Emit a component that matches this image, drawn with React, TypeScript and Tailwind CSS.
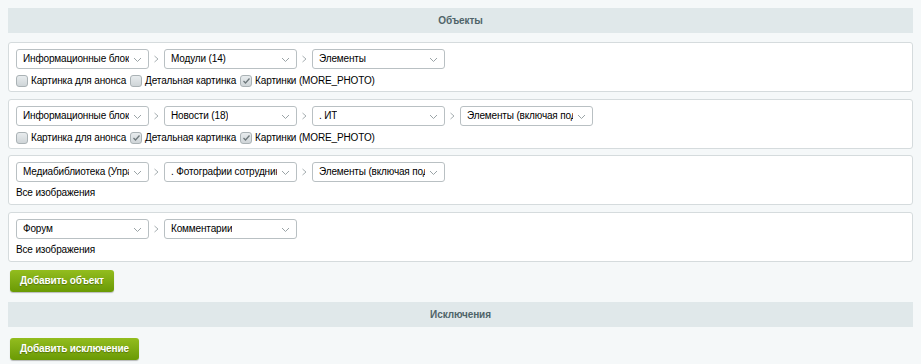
const Chevron = () => (
  <svg width="15" height="20" viewBox="0 0 15 20" className="shrink-0">
    <path d="M5.5 7 L9 10 L5.5 13" fill="none" stroke="#a7afb2" strokeWidth="1" />
  </svg>
);

const Select = ({ label, width = 133 }: { label: string; width?: number }) => (
  <div
    className="relative flex h-[20px] shrink-0 items-center rounded-[3px] border border-[#b9c0c3] bg-white pl-[6px] pr-[19px]"
    style={{ width }}
  >
    <span className="overflow-hidden whitespace-nowrap text-[10px] leading-[14px] tracking-[-0.15px] text-black">
      {label}
    </span>
    <svg width="9" height="6" viewBox="0 0 9 6" className="absolute right-[6px] top-[7px]">
      <path d="M1 1 L4.5 4.5 L8 1" fill="none" stroke="#9aa3a6" strokeWidth="1" />
    </svg>
  </div>
);

const Checkbox = ({ label, checked }: { label: string; checked?: boolean }) => (
  <label className="flex items-center gap-[3px] text-[10px] leading-[14px] tracking-[-0.15px] text-black">
    <span className="flex h-[12px] w-[12px] items-center justify-center rounded-[3px] border border-[#aab2b5] bg-gradient-to-b from-[#e8ecee] to-[#cfd5d8]">
      {checked && (
        <svg width="9" height="8" viewBox="0 0 9 8">
          <path d="M1.5 4 L3.5 6 L7.5 1.5" fill="none" stroke="#6d777b" strokeWidth="1.3" />
        </svg>
      )}
    </span>
    <span className="mr-[4px]">{label}</span>
  </label>
);

type Row = {
  selects: { label: string; width?: number }[];
  checks?: { label: string; checked?: boolean }[];
  note?: string;
};

const rows: Row[] = [
  {
    selects: [{ label: "Информационные блоки" }, { label: "Модули (14)" }, { label: "Элементы" }],
    checks: [
      { label: "Картинка для анонса" },
      { label: "Детальная картинка" },
      { label: "Картинки (MORE_PHOTO)", checked: true },
    ],
  },
  {
    selects: [
      { label: "Информационные блоки" },
      { label: "Новости (18)" },
      { label: ". ИТ" },
      { label: "Элементы (включая подразделы)" },
    ],
    checks: [
      { label: "Картинка для анонса" },
      { label: "Детальная картинка", checked: true },
      { label: "Картинки (MORE_PHOTO)", checked: true },
    ],
  },
  {
    selects: [
      { label: "Медиабиблиотека (Управление)" },
      { label: ". Фотографии сотрудников" },
      { label: "Элементы (включая подразделы)" },
    ],
    note: "Все изображения",
  },
  {
    selects: [{ label: "Форум" }, { label: "Комментарии" }],
    note: "Все изображения",
  },
];

const Header = ({ title }: { title: string }) => (
  <div className="flex h-[25px] items-center justify-center bg-[#e0e8ea] text-[10px] font-bold tracking-[-0.1px] text-[#4f6469]">
    {title}
  </div>
);

const GreenButton = ({ label }: { label: string }) => (
  <button className="ml-[2px] h-[22px] rounded-[3px] bg-gradient-to-b from-[#93bd1e] to-[#6a9a04] px-[10px] text-[10px] font-bold tracking-[-0.15px] text-white shadow-[0_1px_1px_rgba(0,0,0,0.25)] [text-shadow:0_1px_1px_rgba(0,0,0,0.3)]">
    {label}
  </button>
);

export default function App() {
  return (
    <div className="min-h-[364px] bg-[#f5f8f9] px-[8px] pt-[8px] font-[family-name:'Liberation_Sans',Arial,sans-serif]">
      <Header title="Объекты" />
      <div className="mt-[9px] flex flex-col gap-[6.5px]">
        {rows.map((row, i) => (
          <div
            key={i}
            className="h-[50px] rounded-[3px] border border-[#d5dbdd] bg-white pl-[7px] pt-[6px]"
          >
            <div className="flex items-center">
              {row.selects.map((s, j) => (
                <div key={j} className="flex items-center">
                  {j > 0 && <Chevron />}
                  <Select label={s.label} width={s.width} />
                </div>
              ))}
            </div>
            {row.checks ? (
              <div className="mt-[5px] flex items-center">
                {row.checks.map((c, j) => (
                  <Checkbox key={j} label={c.label} checked={c.checked} />
                ))}
              </div>
            ) : (
              <div className="mt-[4px] text-[10px] leading-[14px] tracking-[-0.15px] text-black">
                {row.note}
              </div>
            )}
          </div>
        ))}
      </div>
      <div className="mt-[8px] flex">
        <GreenButton label="Добавить объект" />
      </div>
      <div className="mt-[10px]">
        <Header title="Исключения" />
      </div>
      <div className="mt-[11px] flex pb-[6px]">
        <GreenButton label="Добавить исключение" />
      </div>
    </div>
  );
}
